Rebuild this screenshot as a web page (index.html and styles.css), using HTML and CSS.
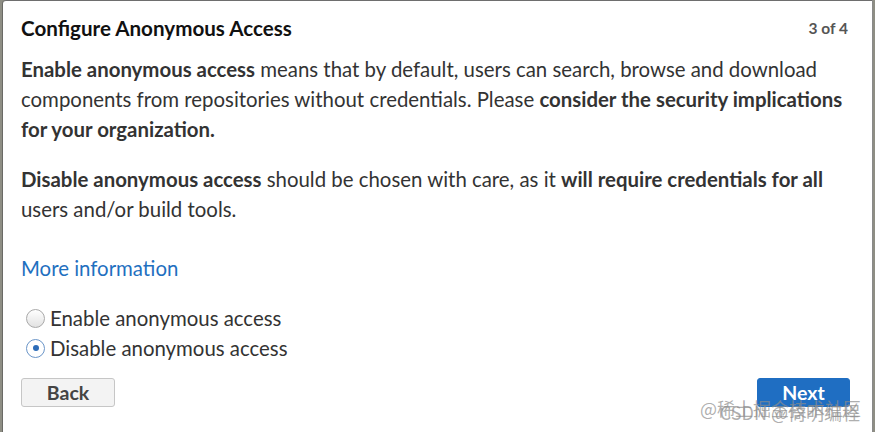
FILE: index.html
```html
<!DOCTYPE html>
<html>
<head>
<meta charset="utf-8">
<link rel="stylesheet" href="styles.css">
</head>
<body>
<div class="panel">
  <div class="header">
    <h1 class="title">Configure Anonymous Access</h1>
    <span class="step">3 of 4</span>
  </div>
  <p class="para first"><b>Enable anonymous access</b> means that by default, users can search, browse and download components from repositories without credentials. Please <b>consider the security implications for your organization.</b></p>
  <p class="para"><b>Disable anonymous access</b> should be chosen with care, as it <b>will require credentials for all</b> users and/or build tools.</p>
  <a class="more" href="#">More information</a>
  <div class="options">
    <label class="option"><span class="radio"></span>Enable anonymous access</label>
    <label class="option"><span class="radio checked"></span>Disable anonymous access</label>
  </div>
  <div class="actions">
    <button class="btn back">Back</button>
    <button class="btn next">Next</button>
  </div>
  <div class="watermark">
    <span class="wm1">@稀土掘金技术社区</span>
    <span class="wm2">CSDN @倚明编程</span>
  </div>
</div>
</body>
</html>
```

FILE: styles.css
```css
html, body {
  margin: 0;
  padding: 0;
}
body {
  background: #8e8e84;
  width: 875px;
  height: 432px;
  overflow: hidden;
  font-family: Lato, "Noto Sans", sans-serif;
}
.panel {
  position: relative;
  box-sizing: border-box;
  margin-left: 2px;
  width: 871px;
  height: 432px;
  background: #fff;
  border-left: 1px solid #6a6a66;
  border-top: 1px solid #6e6e6e;
  border-right: 1px solid #8a8a8a;
  border-top-left-radius: 4px;
  padding: 9px 22px 0 18px;
  color: #333;
}
.header {
  display: flex;
  justify-content: space-between;
  align-items: center;
  height: 36px;
}
.title {
  margin: 0;
  font-size: 20.6px;
  font-weight: 700;
  color: #111;
}
.step {
  font-size: 15.5px;
  font-weight: 700;
  color: #555;
  margin-right: 2px;
}
.para {
  margin: 0 0 20px;
  font-size: 20.4px;
  line-height: 30px;
}
.para.first {
  margin-top: 8px;
}
.para b {
  font-weight: 700;
}
.more {
  display: block;
  margin-top: 29px;
  font-size: 20.4px;
  line-height: 30px;
  color: #1f70bf;
  text-decoration: none;
}
.options {
  margin-top: 20px;
  display: flex;
  flex-direction: column;
}
.option {
  display: flex;
  align-items: center;
  height: 30px;
  font-size: 20.4px;
  padding-left: 5px;
}
.radio {
  box-sizing: border-box;
  width: 19px;
  height: 19px;
  border-radius: 50%;
  border: 1px solid #a9a9a9;
  background: linear-gradient(#fff, #e2e2e2);
  margin-right: 5px;
  display: flex;
  align-items: center;
  justify-content: center;
}
.radio.checked {
  border-color: #6a95c8;
  background: #fff;
}
.radio.checked::after {
  content: "";
  width: 6px;
  height: 6px;
  border-radius: 50%;
  background: #2d6cb8;
}
.actions {
  display: flex;
  justify-content: space-between;
  margin-top: 15px;
}
.btn {
  width: 94px;
  height: 29px;
  border-radius: 3px;
  font-family: Lato, "Noto Sans", sans-serif;
  font-size: 19.5px;
  font-weight: 700;
  padding: 0;
}
.back {
  background: #f3f3f3;
  border: 1px solid #c6c6c6;
  color: #444;
}
.next {
  width: 93px;
  background: #1f6ec2;
  border: 1px solid #1f6ec2;
  color: #fff;
}
.watermark {
  position: absolute;
  right: 10px;
  top: 398px;
  display: flex;
  flex-direction: column;
  align-items: flex-end;
  font-family: "Noto Sans CJK SC", sans-serif;
  font-size: 18px;
  line-height: 18px;
  color: rgba(140, 140, 140, 0.7);
}
.wm1 {
  margin-right: 1px;
}
.wm2 {
  margin-top: -14px;
  margin-right: 2px;
}
```
